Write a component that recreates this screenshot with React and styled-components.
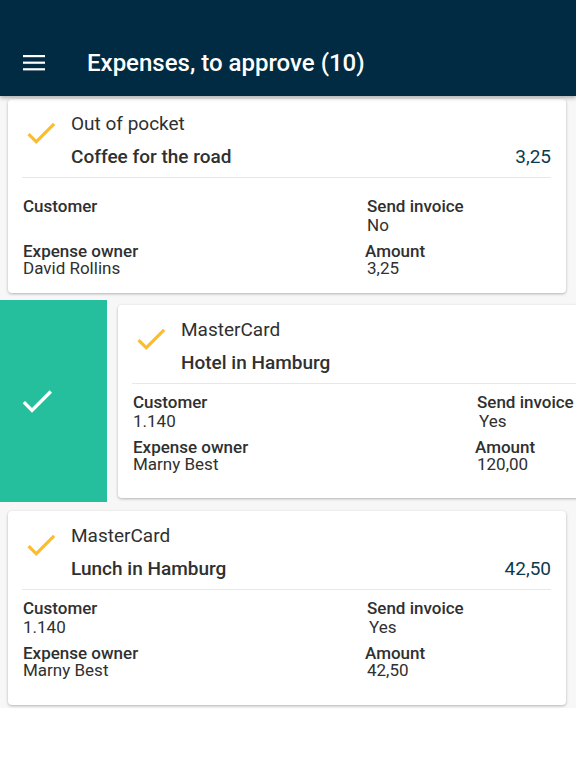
import React from 'react';
import styled, { createGlobalStyle } from 'styled-components';

const GlobalStyle = createGlobalStyle`
  html, body {
    margin: 0;
    padding: 0;
    background: #ffffff;
    font-family: Roboto, "Liberation Sans", sans-serif;
  }
`;

const Page = styled.div`
  width: 576px;
  min-height: 768px;
  background: #ffffff;
  overflow: hidden;
`;

const AppBar = styled.header`
  position: relative;
  z-index: 2;
  height: 96px;
  box-sizing: border-box;
  padding-top: 30px;
  background: #002b42;
  display: flex;
  align-items: center;
  box-shadow: 0 2px 4px rgba(0, 0, 0, 0.3);
`;

const MenuButton = styled.button`
  width: 66px;
  height: 66px;
  padding: 0 0 0 23px;
  border: 0;
  background: transparent;
  display: flex;
  align-items: center;
  color: #ffffff;
`;

const Title = styled.h1`
  margin: 0 0 0 21px;
  font-size: 24px;
  font-weight: 500;
  color: #ffffff;
  letter-spacing: 0;
`;

const List = styled.main`
  background: #f7f7f7;
  padding: 3px 0 3px;
`;

const Card = styled.article`
  flex: none;
  width: 558px;
  box-sizing: border-box;
  margin: ${p => p.$margin || '0 10px 0 8px'};
  padding: 14px 15px ${p => (p.$spacious ? '16px' : '26px')} 14px;
  background: #ffffff;
  border-radius: 4px;
  box-shadow: 0 1px 3px rgba(0, 0, 0, 0.28);
  color: #303030;
`;

const CardHead = styled.div`
  display: flex;
  padding-bottom: 9px;
  border-bottom: 1px solid #e8e8e8;
`;

const CheckSlot = styled.div`
  width: 49px;
  flex: none;
  padding-top: 1px;
  color: #fbbd2c;
`;

const HeadText = styled.div`
  flex: 1;
  display: flex;
  flex-direction: column;
  gap: 11px;
`;

const Method = styled.div`
  font-size: 19px;
  line-height: 22px;
`;

const TitleRow = styled.div`
  display: flex;
  justify-content: space-between;
  font-size: 19px;
  line-height: 22px;
`;

const ExpenseName = styled.span`
  font-weight: 500;
`;

const Total = styled.span`
  color: #0b3a52;
`;

const Fields = styled.div`
  display: grid;
  grid-template-columns: 344px 1fr;
  row-gap: 8px;
  padding-top: ${p => (p.$spacious ? '19px' : '9px')};
  padding-left: 1px;
`;

const Field = styled.div`
  display: flex;
  flex-direction: column;
  margin-left: ${p => p.$shift || 0}px;
`;

const Label = styled.div`
  font-size: 17px;
  line-height: ${p => (p.$tight ? '17px' : '19px')};
  font-weight: 500;
`;

const Value = styled.div`
  font-size: 17px;
  line-height: ${p => (p.$tight ? '17px' : '19px')};
  min-height: ${p => (p.$tight ? '17px' : '19px')};
  margin-left: ${p => p.$shift || 0}px;
`;

const SwipeRow = styled.div`
  display: flex;
  height: 202px;
  margin: 7px 0 9px;
  overflow: hidden;
`;

const ApproveAction = styled.div`
  flex: none;
  width: 107px;
  background: #26bf9d;
  display: flex;
  align-items: center;
  justify-content: center;
  color: #ffffff;
  padding-right: 33px;
  box-sizing: border-box;
`;

const Check = ({ size = 38 }) => (
  <svg width={size} height={size} viewBox="0 0 24 24" fill="currentColor">
    <path d="M9 16.17L4.83 12l-1.42 1.41L9 19 21 7l-1.41-1.41z" />
  </svg>
);

const expenses = [
  {
    method: 'Out of pocket',
    name: 'Coffee for the road',
    total: '3,25',
    customer: '',
    invoice: 'No',
    owner: 'David Rollins',
    amount: '3,25',
    spacious: true,
  },
  {
    method: 'MasterCard',
    name: 'Hotel in Hamburg',
    total: '120,00',
    customer: '1.140',
    invoice: 'Yes',
    owner: 'Marny Best',
    amount: '120,00',
    swiped: true,
  },
  {
    method: 'MasterCard',
    name: 'Lunch in Hamburg',
    total: '42,50',
    customer: '1.140',
    invoice: 'Yes',
    owner: 'Marny Best',
    amount: '42,50',
  },
];

function ExpenseCard({ item, margin }) {
  return (
    <Card $margin={margin} $spacious={item.spacious}>
      <CardHead>
        <CheckSlot>
          <Check />
        </CheckSlot>
        <HeadText>
          <Method>{item.method}</Method>
          <TitleRow>
            <ExpenseName>{item.name}</ExpenseName>
            <Total>{item.total}</Total>
          </TitleRow>
        </HeadText>
      </CardHead>
      <Fields $spacious={item.spacious}>
        <Field>
          <Label>Customer</Label>
          <Value>{item.customer}</Value>
        </Field>
        <Field>
          <Label>Send invoice</Label>
          <Value $shift={item.invoice === 'Yes' ? 2 : 0}>{item.invoice}</Value>
        </Field>
        <Field>
          <Label $tight>Expense owner</Label>
          <Value $tight>{item.owner}</Value>
        </Field>
        <Field $shift={-2}>
          <Label $tight>Amount</Label>
          <Value $tight $shift={2}>{item.amount}</Value>
        </Field>
      </Fields>
    </Card>
  );
}

export default function App() {
  return (
    <Page>
      <GlobalStyle />
      <AppBar>
        <MenuButton aria-label="Menu">
          <svg width="22" height="16" viewBox="0 0 22 16" fill="currentColor">
            <rect x="0" y="0" width="22" height="2.2" />
            <rect x="0" y="6.6" width="22" height="2.2" />
            <rect x="0" y="13.2" width="22" height="2.2" />
          </svg>
        </MenuButton>
        <Title>Expenses, to approve (10)</Title>
      </AppBar>
      <List>
        {expenses.map((item, i) =>
          item.swiped ? (
            <SwipeRow key={i}>
              <ApproveAction>
                <Check size={40} />
              </ApproveAction>
              <ExpenseCard item={item} margin="5px 0 4px 11px" />
            </SwipeRow>
          ) : (
            <React.Fragment key={i}>
              <ExpenseCard item={item} />
            </React.Fragment>
          )
        )}
      </List>
    </Page>
  );
}
